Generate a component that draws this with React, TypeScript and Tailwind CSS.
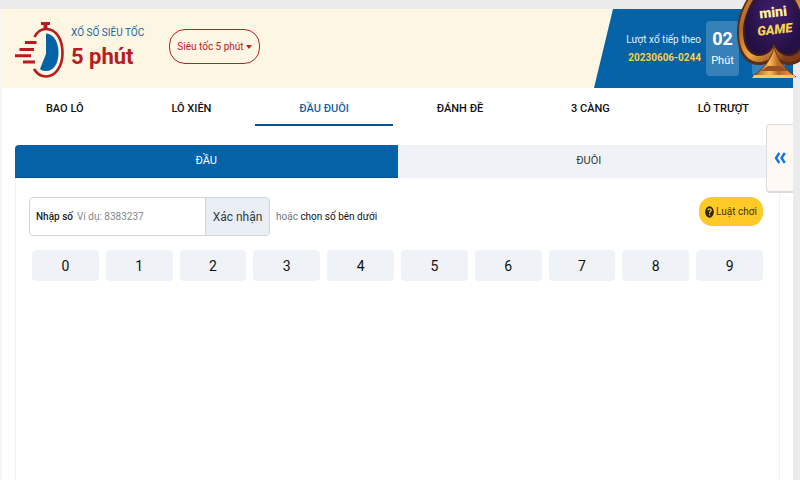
import React, { useState } from "react";

const games = ["BAO LÔ", "LÔ XIÊN", "ĐẦU ĐUÔI", "ĐÁNH ĐỀ", "3 CÀNG", "LÔ TRƯỢT"];
const digits = ["0", "1", "2", "3", "4", "5", "6", "7", "8", "9"];

function StopwatchLogo() {
  return (
    <svg className="h-[58px] w-[50px] shrink-0" viewBox="0 0 50 58" fill="none" aria-hidden="true">
      <path d="M26 1h9v3h-2.500v4h-4V4H26Z" fill="#b81c1f" />
      <path d="M19.500 16C22 11 26 8 31 8C41 8 47.500 18 47.500 32C47.500 46 40 55.500 31 55.500C26 55.500 22 53 19 48" stroke="#b81c1f" strokeWidth="2.600" />
      <path d="M10 21.500h11.500M4.500 28.500h14.500M0 34.800h16M8 41h12" stroke="#b81c1f" strokeWidth="3" />
      <path d="M31 12.500C39 13 43.500 21 43.500 31.500C43.500 43 38.500 50 31 50C28.500 50 26.500 49.500 25 48L31 33Z" fill="#0462a6" />
    </svg>
  );
}

function MiniGameBadge() {
  return (
    <svg className="h-[80px] w-[64px]" viewBox="0 0 64 80" aria-hidden="true">
      <defs>
        <linearGradient id="gold" x1="0" y1="0" x2="0.6" y2="1">
          <stop offset="0" stopColor="#e09a3c" />
          <stop offset="0.5" stopColor="#b0682a" />
          <stop offset="0.75" stopColor="#f0a640" />
          <stop offset="1" stopColor="#7c3c18" />
        </linearGradient>
        <linearGradient id="stem" x1="0" y1="0" x2="1" y2="0">
          <stop offset="0" stopColor="#8f4617" />
          <stop offset="0.4" stopColor="#ffbd50" />
          <stop offset="0.6" stopColor="#b5642a" />
          <stop offset="1" stopColor="#f3ad46" />
        </linearGradient>
        <radialGradient id="night">
          <stop offset="0" stopColor="#43206f" />
          <stop offset="1" stopColor="#241045" />
        </radialGradient>
      </defs>
      <path d="M38 -34C30 -24 1 0 1 32C1 52 9 65 23 65C30 65 35 62 38 57C41 62 47 65 53 65C67 65 75 52 75 32C75 0 46 -24 38 -34Z" fill="#5d2c17" />
      <path d="M38 -32C30 -22 3 1 3 32C3 50 11 62 23 62C30 62 35 59 38 54C41 59 47 62 53 62C65 62 73 50 73 32C73 1 46 -22 38 -32Z" fill="url(#gold)" />
      <path d="M38 -28C31 -18 7 4 7 32C7 47 14 56 23 56C31 56 36 51 38 45C40 51 46 56 53 56C62 56 69 47 69 32C69 4 45 -18 38 -28Z" fill="#3d1c24" />
      <path d="M38 -26C31 -16 9 5 9 31C9 46 15 54 23 54C31 54 36 48 38 42C40 48 46 54 53 54C61 54 67 46 67 31C67 5 45 -16 38 -26Z" fill="url(#night)" />
      <path d="M38 45C37 57 29 68 16 77H60C48 69 40 58 38 45Z" fill="url(#stem)" stroke="#6a321a" strokeWidth="1" />
      <path d="M16 78H60L58 75H18Z" fill="#ffc75e" />
      <path d="M25 71H52L45 66H32Z" fill="#99501e" />
      <g transform="rotate(-6 38 22)" textAnchor="middle" fontFamily="Roboto, sans-serif" fontWeight="900">
        <text x="38" y="17" fontSize="14" fill="#fff0a0">mini</text>
        <text x="38" y="34" fontSize="13" fontStyle="italic" fill="#f7d24e">GAME</text>
      </g>
    </svg>
  );
}

function CountBox({ value, unit }: { value: string; unit: string }) {
  return (
    <div className="flex h-[55px] w-[33px] flex-col items-center justify-center gap-1 rounded bg-[#3681b8] text-white">
      <strong className="text-lg leading-5">{value}</strong>
      <span className="text-[11px] leading-4">{unit}</span>
    </div>
  );
}

export default function App() {
  const [game, setGame] = useState("ĐẦU ĐUÔI");
  const [side, setSide] = useState("ĐẦU");

  return (
    <div className="relative flex min-h-screen flex-col overflow-hidden bg-[#ebebeb] pt-[9px] pr-[7px] font-['Roboto','Noto_Sans',sans-serif] text-[#212529]">
      <div className="flex flex-1 flex-col border-l-2 border-[#f6f6f6] bg-white">
        <header className="flex h-[79px] items-stretch bg-[#fdf6e3]">
          <div className="flex items-start pt-3 pl-[13px]">
            <StopwatchLogo />
            <div className="ml-1.5 w-[98px] pt-1 whitespace-nowrap">
              <p className="text-[10px] leading-4 text-[#18639f]">XỔ SỐ SIÊU TỐC</p>
              <h1 className="text-[22px] leading-8 font-bold text-[#b81c1f]">5 phút</h1>
            </div>
            <button className="mt-2 flex h-[35px] w-[91px] items-center justify-center gap-0.5 rounded-[16px] border border-[#b82025] text-[10px] whitespace-nowrap text-[#b82025]">
              Siêu tốc 5 phút
              <svg className="h-1 w-1.5" viewBox="0 0 6 4" aria-hidden="true">
                <path d="M0 0h6L3 4Z" fill="currentColor" />
              </svg>
            </button>
          </div>
          <div className="ml-auto flex w-[199px] items-center justify-end gap-[13px] bg-[#0462a6] pr-2 [clip-path:polygon(19px_0,100%_0,100%_100%,0_100%)]">
            <div className="flex items-center gap-[5px]">
              <div className="text-right whitespace-nowrap">
                <p className="text-[10px] leading-[18px] text-[#e5f0f8]">Lượt xổ tiếp theo</p>
                <p className="text-[10px] leading-[18px] font-bold text-[#f7cf4d]">20230606-0244</p>
              </div>
              <CountBox value="02" unit="Phút" />
            </div>
            <CountBox value="" unit="" />
          </div>
        </header>

        <nav className="flex h-[38px]">
          {games.map((name) => (
            <button
              key={name}
              onClick={() => setGame(name)}
              className={
                name === game
                  ? "flex-auto border-b-2 border-[#0b5294] pt-1.5 text-[11px] font-medium text-[#18639f]"
                  : "flex-auto border-b-2 border-transparent pt-1.5 text-[11px] font-medium text-[#111111]"
              }
            >
              {name}
            </button>
          ))}
        </nav>

        <main className="mx-[13px] mt-[19px] flex flex-1 flex-col">
          <div className="grid h-[33px] grid-cols-2 overflow-hidden rounded-t bg-[#eff3f8]">
            {["ĐẦU", "ĐUÔI"].map((name) => (
              <button
                key={name}
                onClick={() => setSide(name)}
                className={
                  name === side
                    ? "border-b border-[#0b5294] bg-[#0462a6] text-[11px] text-white"
                    : "text-[11px] text-[#333b42]"
                }
              >
                {name}
              </button>
            ))}
          </div>
          <section className="flex-1 border-x border-[#f0f1f3] px-[13px] pt-[19px]">
            <div className="flex items-start justify-between pr-[3px]">
              <div className="flex items-center">
                <div className="flex h-[39px] w-[241px] overflow-hidden rounded border border-[#cfd5da]">
                  <label htmlFor="number" className="flex items-center pl-1.5 text-[10px] font-medium whitespace-nowrap">
                    Nhập số
                  </label>
                  <input
                    id="number"
                    placeholder="Ví dụ: 8383237"
                    className="min-w-0 flex-1 px-1 text-[10px] outline-none placeholder:text-[#83888c]"
                  />
                  <button className="w-16 border-l border-[#cfd5da] bg-[#e9edf4] text-xs whitespace-nowrap text-[#333b42]">
                    Xác nhận
                  </button>
                </div>
                <p className="ml-1.5 text-[10px] whitespace-nowrap text-[#73797e]">
                  hoặc <span className="text-[#111111]">chọn số bên dưới</span>
                </p>
              </div>
              <button className="flex h-[29px] w-16 items-center justify-center gap-0.5 rounded-[13px] bg-[#ffc926] text-[10px] whitespace-nowrap text-[#40351a]">
                <svg className="h-3 w-[9px] shrink-0" viewBox="0 0 9 12" aria-hidden="true">
                  <ellipse cx="4.500" cy="6" rx="4.300" ry="5.700" fill="#29230f" />
                  <path d="M2.900 4.400C3.100 2.200 6.300 2.300 6.200 4.400C6.100 5.700 4.500 5.500 4.500 7.200M4.500 8.300v1.300" fill="none" stroke="#ffc926" strokeWidth="1.300" />
                </svg>
                Luật chơi
              </button>
            </div>
            <div className="mt-[14px] grid grid-cols-10 gap-[7px] pr-[3px] pl-[3px]">
              {digits.map((digit) => (
                <button key={digit} className="h-[31px] rounded bg-[#eff3f8] text-sm text-[#111111]">
                  {digit}
                </button>
              ))}
            </div>
          </section>
        </main>
      </div>

      <button
        aria-label="Mở bảng bên"
        className="absolute top-[124px] right-[7px] flex h-[69px] w-[27px] items-center justify-center rounded-l border border-r-0 border-b-2 border-[#dcdcdc] bg-[#fff9f5]"
      >
        <svg className="h-3 w-3" viewBox="0 0 12 12" fill="none" stroke="#1273eb" strokeWidth="2.400" strokeLinejoin="round" aria-hidden="true">
          <path d="M5.300 1L2 6L5.300 11M10.800 1L7.500 6L10.800 11" />
        </svg>
      </button>
      <button aria-label="Mini game" className="absolute top-0 right-0">
        <MiniGameBadge />
      </button>
    </div>
  );
}
